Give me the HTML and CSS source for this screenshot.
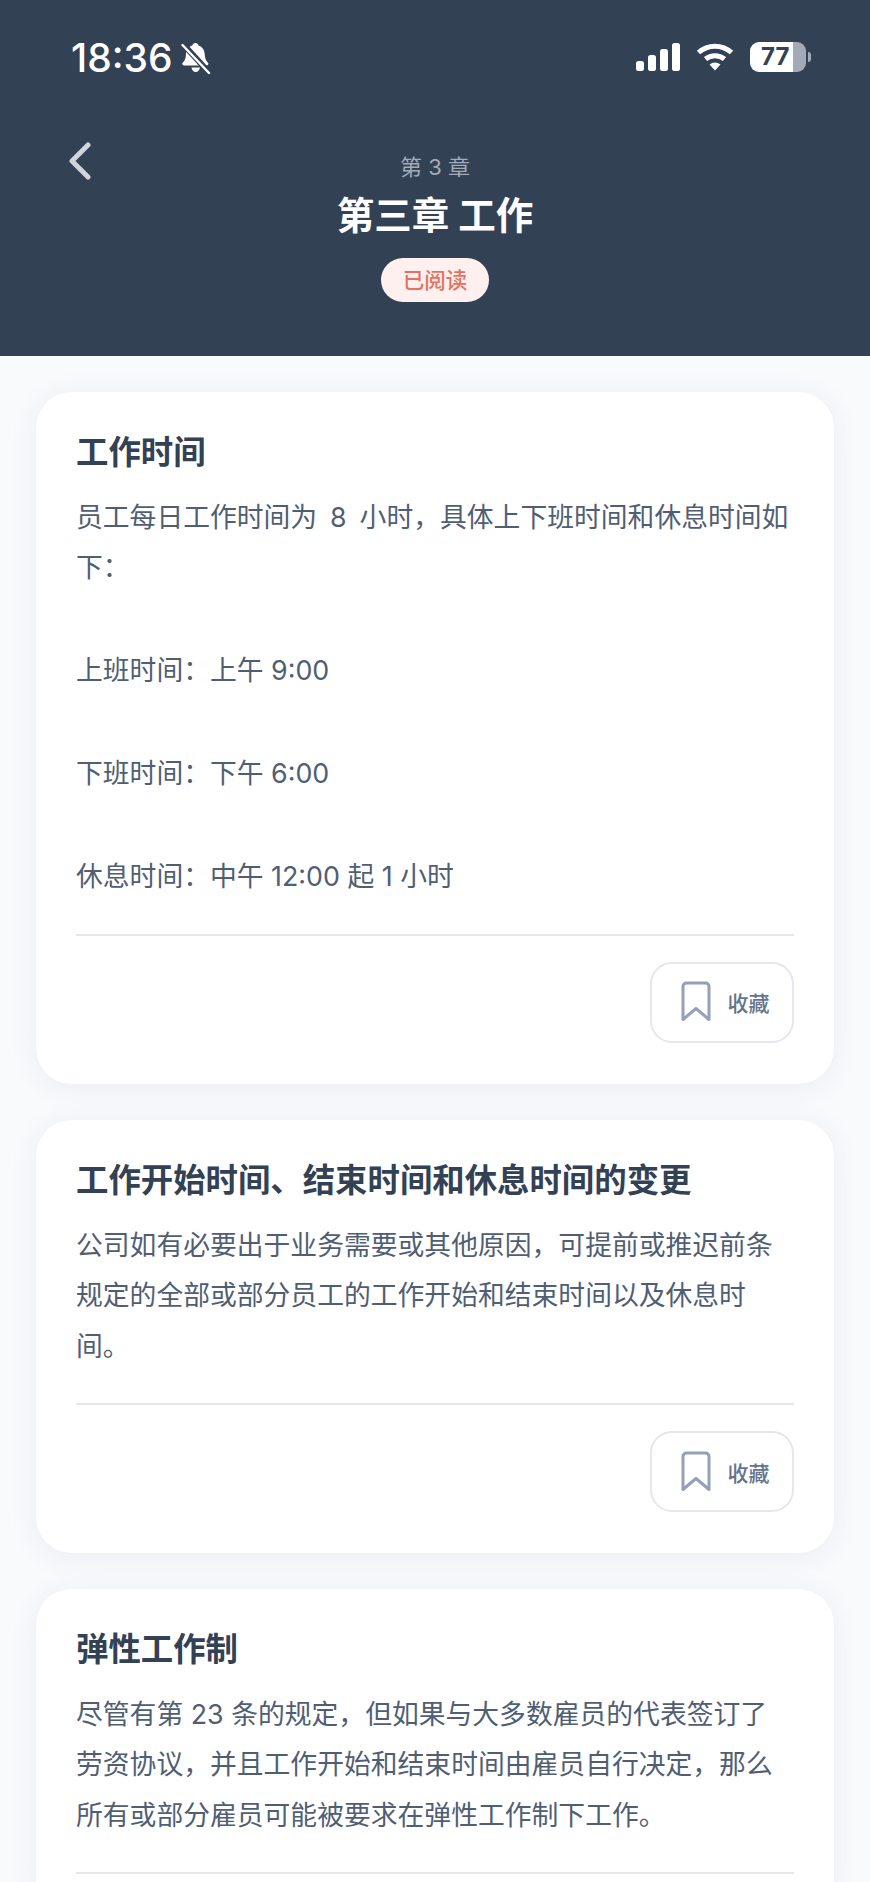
FILE: index.html
```html
<!doctype html>
<html lang="zh-CN">

<head>
	<meta charset="UTF-8">
	<meta name="viewport" content="width=device-width, initial-scale=1">
	<title>第三章 工作</title>
	<link rel="stylesheet" href="styles.css">
</head>

<body>
	<header class="top">
		<div class="status">
			<div class="status-left">
				<span class="time">18:36</span>
				<svg class="bell" width="30" height="32" viewBox="0 0 30 32">
					<path d="M14.5 1c1.6 0 2.6 1 2.9 2.4 4 1.2 6 4.4 6.3 8.6.2 4.2 1 6.6 3.2 8.6 1 1 .6 2.9-1.2 2.9H3c-1.8 0-2.2-1.9-1.2-2.9 2.2-2 3-4.4 3.2-8.6.3-4.2 2.3-7.4 6.3-8.6C11.600 2 12.900 1 14.500 1z" fill="#fff" />
					<path d="M10.500 25.500h8.500c-.4 2.700-2.100 4.500-4.300 4.500s-3.800-1.800-4.200-4.500z" fill="#fff" />
					<path d="M1.500 1.500 28.500 31" stroke="#334155" stroke-width="6" />
					<path d="M1.500 3 28 31" stroke="#fff" stroke-width="2.400" stroke-linecap="round" />
				</svg>
			</div>
			<div class="status-right">
				<svg width="44" height="28" viewBox="0 0 44 28" fill="#fff">
					<rect x="0" y="18" width="8" height="10" rx="2.500" />
					<rect x="12" y="12" width="8" height="16" rx="2.500" />
					<rect x="24" y="6" width="8" height="22" rx="2.500" />
					<rect x="36" y="0" width="8" height="28" rx="2.500" />
				</svg>
				<svg width="38" height="28" viewBox="0 0 38 28" fill="none" stroke="#fff" stroke-width="5">
					<path d="M2.500 9.500C12 1 26 1 35.500 9.500" />
					<path d="M9.500 16C15 11.500 23 11.500 28.500 16" />
					<path d="M13.500 21.500 19 27.500 24.500 21.500C21 18.800 17 18.800 13.500 21.500z" fill="#fff" stroke="none" />
				</svg>
				<div class="battery">
					<div class="battery-body">77</div>
					<div class="battery-tip"></div>
				</div>
			</div>
		</div>
		<div class="nav">
			<a class="back">
				<svg width="24" height="38" viewBox="0 0 24 38" fill="none" stroke="#d1d5db" stroke-width="5" stroke-linecap="round" stroke-linejoin="round">
					<path d="M20 3 4 19 20 35" />
				</svg>
			</a>
			<div class="nav-title">
				<div class="chapter-no">第 3 章</div>
				<h1>第三章 工作</h1>
				<span class="badge">已阅读</span>
			</div>
		</div>
	</header>

	<main class="list">
		<section class="card">
			<h2>工作时间</h2>
			<div class="text">
				<p class="wide">员工每日工作时间为 8 小时，具体上下班时间和休息时间如下：</p>
				<p>上班时间：上午 9:00</p>
				<p>下班时间：下午 6:00</p>
				<p>休息时间：中午 12:00 起 1 小时</p>
			</div>
			<div class="actions">
				<a class="fav">
					<svg width="30" height="42" viewBox="0 0 30 42" fill="none" stroke="#94a0b8" stroke-width="3" stroke-linejoin="round">
						<path d="M2 38.500V5.500C2 3.500 3.500 2 5.500 2h19C26.500 2 28 3.500 28 5.500v33L15 27.500z" />
					</svg>
					<span>收藏</span>
				</a>
			</div>
		</section>

		<section class="card">
			<h2>工作开始时间、结束时间和休息时间的变更</h2>
			<div class="text">
				<p>公司如有必要出于业务需要或其他原因，可提前或推迟前条规定的全部或部分员工的工作开始和结束时间以及休息时间。</p>
			</div>
			<div class="actions">
				<a class="fav">
					<svg width="30" height="42" viewBox="0 0 30 42" fill="none" stroke="#94a0b8" stroke-width="3" stroke-linejoin="round">
						<path d="M2 38.500V5.500C2 3.500 3.500 2 5.500 2h19C26.500 2 28 3.500 28 5.500v33L15 27.500z" />
					</svg>
					<span>收藏</span>
				</a>
			</div>
		</section>

		<section class="card">
			<h2>弹性工作制</h2>
			<div class="text">
				<p>尽管有第 23 条的规定，但如果与大多数雇员的代表签订了劳资协议，并且工作开始和结束时间由雇员自行决定，那么所有或部分雇员可能被要求在弹性工作制下工作。</p>
			</div>
		</section>
	</main>
</body>

</html>
```

FILE: styles.css
```css
html,
body {
	margin: 0;
	padding: 0;
	height: 1882px;
	overflow: hidden;
	background: #f8fafc;
	font-family: "Inter", "Noto Sans CJK SC", sans-serif;
}

h1,
h2,
p {
	margin: 0;
	padding: 0;
}

.top {
	height: 356px;
	box-sizing: border-box;
	background: #334155;
	color: #fff;
}

.status {
	height: 114px;
	box-sizing: border-box;
	padding: 36px 59px 0 71px;
	display: flex;
	justify-content: space-between;
	align-items: flex-start;
}

.status-left {
	display: flex;
	align-items: center;
	gap: 8px;
}

.time {
	font-size: 39px;
	line-height: 44px;
	font-weight: 500;
}

.status-right {
	display: flex;
	align-items: center;
	gap: 16px;
	padding-top: 6px;
}

.battery {
	display: flex;
	align-items: center;
	gap: 2px;
}

.battery-body {
	width: 56px;
	height: 30px;
	border-radius: 9px;
	background: linear-gradient(to right, #fff 76%, #a3a9b5 76%);
	color: #334155;
	font-size: 24px;
	line-height: 30px;
	font-weight: 700;
	text-indent: 11px;
}

.battery-tip {
	width: 3px;
	height: 10px;
	border-radius: 0 3px 3px 0;
	background: #a3a9b5;
}

.nav {
	display: grid;
	grid-template-columns: 1fr auto 1fr;
	padding: 0 70px;
}

.back {
	display: block;
	padding-top: 28px;
	margin-left: -2px;
}

.nav-title {
	display: flex;
	flex-direction: column;
	align-items: center;
	padding-top: 38px;
}

.chapter-no {
	font-size: 22px;
	line-height: 30px;
	color: #a3abb8;
}

h1 {
	font-size: 37.500px;
	line-height: 50px;
	font-weight: 700;
	margin-top: 9px;
}

.badge {
	margin-top: 17px;
	height: 44px;
	line-height: 44px;
	padding: 0 22px;
	border-radius: 22px;
	background: #fff0f0;
	color: #e8705f;
	font-size: 21.500px;
	font-weight: 500;
}

.list {
	padding: 36px 36px 0;
	display: flex;
	flex-direction: column;
	gap: 36px;
}

.card {
	padding: 40px 40px 41px;
	background: #fff;
	border-radius: 36px;
	box-shadow: 0 4px 30px rgba(51, 65, 85, .07);
}

h2 {
	font-size: 32.400px;
	line-height: 42px;
	font-weight: 700;
	color: #334155;
}

.text {
	margin-top: 18px;
	color: #505e74;
	font-size: 26.800px;
	line-height: 50.400px;
	padding-bottom: 32px;
	border-bottom: 2px solid #e5e7eb;
}

.text p {
	padding-right: 4px;
}

.text p + p {
	margin-top: 52.600px;
}

.text .wide {
	word-spacing: 5.400px;
}

.actions {
	display: flex;
	justify-content: flex-end;
	margin-top: 26px;
}

.fav {
	display: flex;
	align-items: center;
	justify-content: center;
	gap: 17px;
	width: 144px;
	height: 81px;
	box-sizing: border-box;
	padding-left: 6px;
	border: 2px solid #e4e7ec;
	border-radius: 22px;
	color: #64748b;
	font-size: 21px;
	font-weight: 500;
}
```
